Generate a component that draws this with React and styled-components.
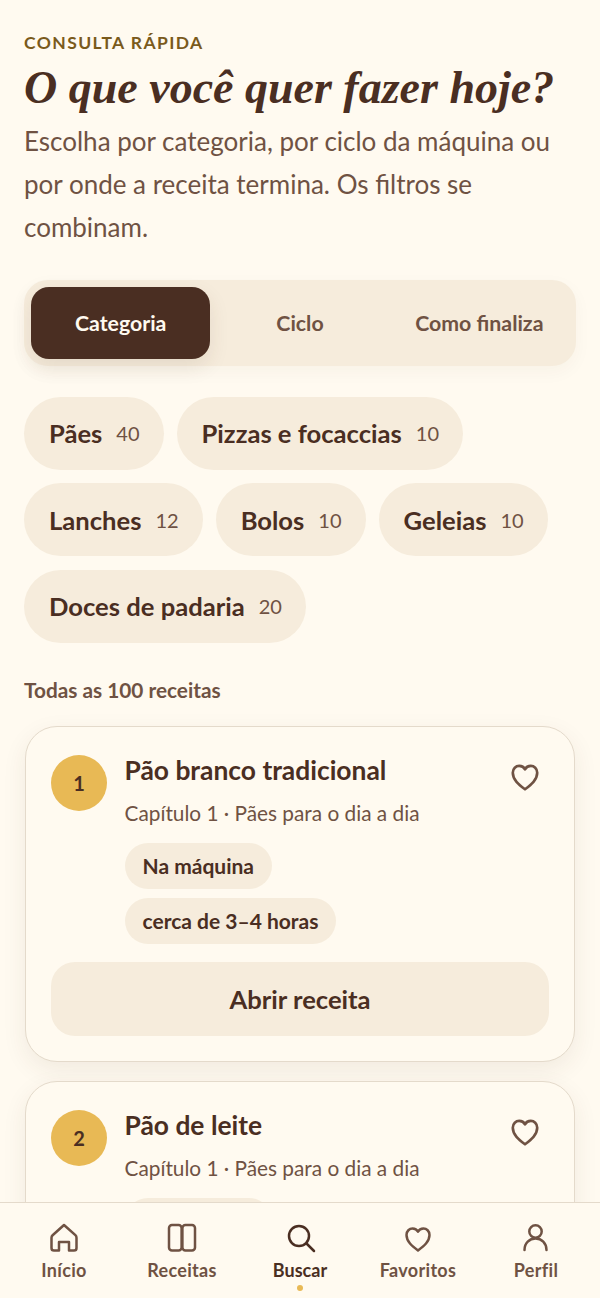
import React from "react";
import styled, { createGlobalStyle } from "styled-components";

const GlobalStyle = createGlobalStyle`
  html, body {
    margin: 0;
    padding: 0;
    height: 100%;
    overflow: hidden;
    background: #fffaf0;
  }
  * { box-sizing: border-box; }
  #root { height: 100%; }
`;

const Screen = styled.div`
  display: flex;
  flex-direction: column;
  width: 600px;
  height: 1298px;
  overflow: hidden;
  background: #fffaf0;
  font-family: Lato, "Liberation Sans", sans-serif;
  color: #4a2e22;
`;

const Content = styled.main`
  flex: 1;
  min-height: 0;
  overflow: hidden;
  padding: 32px 24px 0;
`;

const Eyebrow = styled.div`
  font-size: 17.5px;
  line-height: 22px;
  font-weight: 700;
  letter-spacing: 1.4px;
  color: #7a5a1c;
  text-transform: uppercase;
`;

const Title = styled.h1`
  margin: 8px 0 0;
  font-family: "Liberation Serif", serif;
  font-style: italic;
  font-weight: 700;
  font-size: 46px;
  line-height: 52px;
  color: #4a2e22;
  white-space: nowrap;
`;

const Lead = styled.p`
  margin: 6px 0 0;
  font-size: 26px;
  line-height: 43px;
  color: #6f5243;
`;

const Tabs = styled.div`
  display: grid;
  grid-template-columns: repeat(3, 1fr);
  margin-top: 30.5px;
  padding: 7px;
  height: 86px;
  border-radius: 24px;
  background: #f6ecdc;
  box-shadow: 0 6px 18px rgba(74, 46, 34, 0.04);
`;

const Tab = styled.div`
  display: flex;
  align-items: center;
  justify-content: center;
  border-radius: 18px;
  font-size: 21.3px;
  font-weight: 700;
  color: ${(p) => (p.$active ? "#fffaf0" : "#6f5243")};
  background: ${(p) => (p.$active ? "#4a2e22" : "transparent")};
  box-shadow: ${(p) => (p.$active ? "0 8px 20px rgba(74, 46, 34, 0.1)" : "none")};
`;

const Chips = styled.div`
  display: flex;
  flex-wrap: wrap;
  gap: 13.5px 13px;
  margin-top: 31px;
`;

const Chip = styled.div`
  display: flex;
  align-items: center;
  gap: 14px;
  height: 73px;
  padding: 0 24px 0 25px;
  border-radius: 37px;
  background: #f6ecdc;
  font-size: 25.6px;
  font-weight: 700;
  color: #4a2e22;
`;

const Count = styled.span`
  font-size: 20px;
  font-weight: 400;
  color: #6f5243;
`;

const SectionLabel = styled.div`
  margin-top: 34px;
  font-size: 20.8px;
  line-height: 26px;
  font-weight: 700;
  color: #6f5243;
`;

const Cards = styled.div`
  display: flex;
  flex-direction: column;
  gap: 19px;
  margin-top: 23px;
  padding: 0 1px;
`;

const Card = styled.article`
  padding: 28px 25px 25px;
  border: 1.5px solid #e4dacb;
  border-radius: 32px;
  background: #fffaf0;
  box-shadow: 0 8px 24px rgba(74, 46, 34, 0.08);
`;

const CardTop = styled.div`
  display: flex;
  align-items: flex-start;
  gap: 17.5px;
`;

const Badge = styled.div`
  flex: none;
  display: flex;
  align-items: center;
  justify-content: center;
  width: 56px;
  height: 56px;
  border-radius: 50%;
  background: #e8b955;
  font-size: 20px;
  font-weight: 700;
  color: #4a2e22;
`;

const CardBody = styled.div`
  flex: 1;
  min-width: 0;
`;

const CardTitle = styled.h2`
  margin: 0;
  font-size: 26.4px;
  line-height: 31px;
  font-weight: 700;
  color: #4a2e22;
`;

const CardMeta = styled.div`
  margin-top: 13px;
  font-size: 20.8px;
  line-height: 28px;
  color: #6f5243;
`;

const Tags = styled.div`
  display: flex;
  flex-direction: column;
  align-items: flex-start;
  gap: 9px;
  margin-top: 16px;
`;

const Tag = styled.span`
  display: flex;
  align-items: center;
  height: 46px;
  padding: 0 18px;
  border-radius: 23px;
  background: #f6ecdc;
  font-size: 21px;
  font-weight: 700;
  color: #4a2e22;
`;

const FavButton = styled.button`
  flex: none;
  display: flex;
  padding: 0;
  margin: 4px 7.5px 0 0;
  border: 0;
  background: none;
  color: #6f5243;
`;

const OpenButton = styled.button`
  display: block;
  width: 100%;
  height: 74px;
  margin-top: 18.5px;
  border: 0;
  border-radius: 24px;
  background: #f6ecdc;
  font-family: inherit;
  font-size: 25.6px;
  font-weight: 700;
  color: #4a2e22;
`;

const BottomNav = styled.nav`
  flex: none;
  display: grid;
  grid-template-columns: repeat(5, 1fr);
  height: 96px;
  padding: 0 5px;
  border-top: 1.5px solid #e4dacb;
  background: #fffaf0;
`;

const NavItem = styled.div`
  position: relative;
  display: flex;
  flex-direction: column;
  align-items: center;
  padding-top: 19px;
  gap: 3.5px;
  font-size: 18px;
  line-height: 24px;
  font-weight: 700;
  letter-spacing: ${(p) => (p.$active ? "0" : "0.3px")};
  color: ${(p) => (p.$active ? "#4a2e22" : "#6f5243")};
`;

const NavDot = styled.span`
  position: absolute;
  left: 50%;
  bottom: 7px;
  width: 6px;
  height: 6px;
  margin-left: -3px;
  border-radius: 50%;
  background: #e8b955;
`;

const Svg = styled.svg`
  display: block;
  fill: none;
  stroke: currentColor;
  stroke-width: 2.5;
  stroke-linecap: round;
  stroke-linejoin: round;
`;

const HomeIcon = () => (
  <Svg width="32" height="32" viewBox="0 0 32 32">
    <path d="M16 3 L4.6 13.2 Q3.5 14.2 3.5 15.8 V26 Q3.5 28.6 6 28.6 H11 V20 H21 V28.6 H26 Q28.5 28.6 28.5 26 V15.8 Q28.5 14.2 27.4 13.2 Z" />
  </Svg>
);

const BookIcon = () => (
  <Svg width="32" height="32" viewBox="0 0 32 32">
    <rect x="3" y="3" width="12.6" height="25.6" rx="3" />
    <rect x="16.4" y="3" width="12.6" height="25.6" rx="3" />
  </Svg>
);

const SearchIcon = () => (
  <Svg width="32" height="32" viewBox="0 0 32 32">
    <circle cx="15" cy="14" r="10" />
    <path d="M22.5 21.5 L30 29" />
  </Svg>
);

const HeartIcon = ({ size = 32 }) => (
  <Svg width={size} height={size} viewBox="0 0 32 32">
    <path d="M16 28.5 C10 24 4.5 19.5 4.5 13 C4.5 9 7.5 6.5 10.5 6.5 C13 6.5 15 7.7 16 9.7 C17 7.7 19 6.5 21.5 6.5 C24.5 6.5 27.5 9 27.5 13 C27.5 19.5 22 24 16 28.5 Z" />
  </Svg>
);

const UserIcon = () => (
  <Svg width="32" height="32" viewBox="0 0 32 32">
    <circle cx="15.5" cy="9.5" r="6.2" />
    <path d="M4.5 28 C4.5 21 9.5 16.5 15.5 16.5 S26.5 21 26.5 28" />
  </Svg>
);

const chips = [
  ["Pães", 40],
  ["Pizzas e focaccias", 10],
  ["Lanches", 12],
  ["Bolos", 10],
  ["Geleias", 10],
  ["Doces de padaria", 20],
];

const recipes = [
  { n: 1, title: "Pão branco tradicional", time: "cerca de 3–4 horas" },
  { n: 2, title: "Pão de leite", time: "cerca de 3–4 horas" },
];

const navItems = [
  ["Início", HomeIcon],
  ["Receitas", BookIcon],
  ["Buscar", SearchIcon],
  ["Favoritos", HeartIcon],
  ["Perfil", UserIcon],
];

export default function App() {
  return (
    <Screen>
      <GlobalStyle />
      <Content>
        <Eyebrow>Consulta rápida</Eyebrow>
        <Title>O que você quer fazer hoje?</Title>
        <Lead>Escolha por categoria, por ciclo da máquina ou por onde a receita termina. Os filtros se combinam.</Lead>

        <Tabs>
          <Tab $active>Categoria</Tab>
          <Tab>Ciclo</Tab>
          <Tab>Como finaliza</Tab>
        </Tabs>

        <Chips>
          {chips.map(([label, count]) => (
            <Chip key={label}>
              {label}
              <Count>{count}</Count>
            </Chip>
          ))}
        </Chips>

        <SectionLabel>Todas as 100 receitas</SectionLabel>

        <Cards>
          {recipes.map((r) => (
            <Card key={r.n}>
              <CardTop>
                <Badge>{r.n}</Badge>
                <CardBody>
                  <CardTitle>{r.title}</CardTitle>
                  <CardMeta>Capítulo 1 · Pães para o dia a dia</CardMeta>
                  <Tags>
                    <Tag>Na máquina</Tag>
                    <Tag>{r.time}</Tag>
                  </Tags>
                </CardBody>
                <FavButton aria-label="Favoritar">
                  <HeartIcon size={34} />
                </FavButton>
              </CardTop>
              <OpenButton>Abrir receita</OpenButton>
            </Card>
          ))}
        </Cards>
      </Content>

      <BottomNav>
        {navItems.map(([label, Icon]) => (
          <NavItem key={label} $active={label === "Buscar"}>
            <Icon />
            {label}
            {label === "Buscar" && <NavDot />}
          </NavItem>
        ))}
      </BottomNav>
    </Screen>
  );
}
